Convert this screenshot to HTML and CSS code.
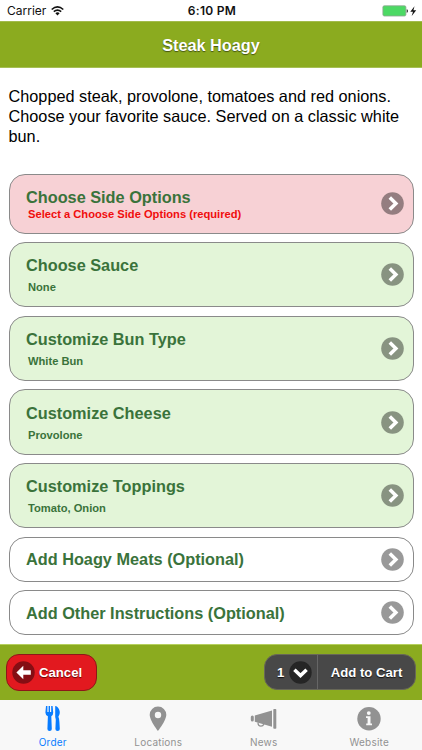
FILE: index.html
```html
<!DOCTYPE html>
<html lang="en">
<head>
<meta charset="utf-8">
<title>Steak Hoagy</title>
<link rel="stylesheet" href="styles.css">
</head>
<body>
<svg class="symbols" aria-hidden="true">
  <symbol id="next" viewBox="0 0 23 23">
    <circle cx="11.5" cy="11.5" r="11.3" fill="#000" fill-opacity=".4"/>
    <path d="M8.8 5.4 14.9 11.5 8.8 17.6" fill="none" stroke="#fff" stroke-width="3.5"/>
  </symbol>
</svg>
<div class="status">
  <div class="carrier"><span>Carrier</span>
    <svg width="13" height="10" viewBox="0 0 13 10" fill="none" stroke="#111" stroke-width="1.6">
      <path d="M.7 3.5Q6.5-1.6 12.3 3.5M2.8 5.7Q6.5 2.5 10.2 5.7"/>
      <path d="M4.4 7.2Q6.5 5.4 8.6 7.2L6.5 9.4Z" fill="#111" stroke="none"/>
    </svg>
  </div>
  <div class="time">6:10 PM</div>
  <div class="power">
    <svg width="35" height="12" viewBox="0 0 35 12">
      <rect x=".9" y=".8" width="23" height="10.2" rx="1.4" fill="#4cd964" stroke="#8fa592" stroke-width=".8"/>
      <path d="M24.7 4.2Q26 4.5 26 6T24.7 7.8Z" fill="#333"/>
      <path d="M32.5 1.2 28.3 6.7H31L29.7 11 34.2 5.2H31.4Z" fill="#111"/>
    </svg>
  </div>
</div>
<header class="title">Steak Hoagy</header>
<main>
  <p class="description">Chopped steak, provolone, tomatoes and red onions. Choose your favorite sauce. Served on a classic white bun.</p>
  <div class="options">
    <div class="option required"><div><h2>Choose Side Options</h2><p>Select a Choose Side Options (required)</p></div><svg class="next"><use href="#next"/></svg></div>
    <div class="option chosen"><div><h2>Choose Sauce</h2><p>None</p></div><svg class="next"><use href="#next"/></svg></div>
    <div class="option chosen"><div><h2>Customize Bun Type</h2><p>White Bun</p></div><svg class="next"><use href="#next"/></svg></div>
    <div class="option chosen"><div><h2>Customize Cheese</h2><p>Provolone</p></div><svg class="next"><use href="#next"/></svg></div>
    <div class="option chosen"><div><h2>Customize Toppings</h2><p>Tomato, Onion</p></div><svg class="next"><use href="#next"/></svg></div>
    <div class="option"><h2>Add Hoagy Meats (Optional)</h2><svg class="next"><use href="#next"/></svg></div>
    <div class="option"><h2>Add Other Instructions (Optional)</h2><svg class="next"><use href="#next"/></svg></div>
  </div>
</main>
<footer class="actions">
  <div class="cancel">
    <svg width="23" height="23" viewBox="0 0 23 23"><circle cx="11.5" cy="11.5" r="11.2" fill="#850e14"/><path d="M4.4 11.5 11.3 4.8V9.3H18.8V13.7H11.3V18.2Z" fill="#fff"/></svg>
    <span>Cancel</span>
  </div>
  <div class="cart">
    <div class="quantity"><span>1</span>
      <svg width="23" height="23" viewBox="0 0 23 23"><circle cx="11.5" cy="11.5" r="11.2" fill="#252525"/><path d="M5.4 8.7 11.5 14.6 17.6 8.7" fill="none" stroke="#fff" stroke-width="3.5"/></svg>
    </div>
    <div class="add">Add to Cart</div>
  </div>
</footer>
<nav class="tabs">
  <div class="tab active">
    <svg width="28" height="28" viewBox="0 0 28 28" fill="currentColor">
      <path d="M7 2H8.4V8H9.6V2H11V8H12.2V2H13.6L14.2 8.5Q14.3 11 12.3 12.3L12.8 25Q12.8 27 10.6 27T8.4 25L8.9 12.3Q6.3 11 6.4 8.5Z"/>
      <path d="M16.2 2Q18.6 2 20.1 5.5 21.8 9 19.4 12.7 20.2 14 20.4 18L20.8 25Q20.8 27 18.6 27T16.4 25L16.8 15.5 16.2 13Z"/>
    </svg><span>Order</span>
  </div>
  <div class="tab">
    <svg width="28" height="28" viewBox="0 0 28 28" fill="currentColor"><path fill-rule="evenodd" d="M14 2.5A8.3 8.3 0 0 1 22.3 10.8C22.3 16.5 14 27 14 27S5.7 16.5 5.7 10.8A8.3 8.3 0 0 1 14 2.5ZM14 7.8A3.2 3.2 0 1 0 14 14.2 3.2 3.2 0 0 0 14 7.8Z"/></svg><span>Locations</span>
  </div>
  <div class="tab">
    <svg width="28" height="28" viewBox="0 0 28 28" fill="currentColor">
      <rect x=".8" y="11.4" width="3" height="6.2" rx="1.5"/><path d="M4.8 11.6 22 6.6V22.8L4.8 17.7Z"/><rect x="23.3" y="5" width="3" height="19.8" rx=".8"/>
      <path d="M8 18.5Q8 22.2 11 22.2 13 22.2 14 20" fill="none" stroke="currentColor" stroke-width="1.3"/>
    </svg><span>News</span>
  </div>
  <div class="tab">
    <svg width="28" height="28" viewBox="0 0 28 28"><circle cx="14" cy="14.8" r="11.7" fill="currentColor"/><circle cx="13.8" cy="9.1" r="1.9" fill="#f8f8f8"/><path d="M11 12.2H15.5V19.5H17V21.2H11.2V19.5H12.6V13.9H11Z" fill="#f8f8f8"/></svg><span>Website</span>
  </div>
</nav>
</body>
</html>
```
FILE: styles.css
```css
* { box-sizing: border-box; }
body {
  margin: 0;
  width: 422px;
  height: 750px;
  overflow: hidden;
  display: flex;
  flex-direction: column;
  background: #fff;
  font-family: "Liberation Sans", Arial, sans-serif;
}
h2, p { margin: 0; }
.symbols { display: none; }
.status {
  height: 21px;
  display: grid;
  grid-template-columns: 1fr auto 1fr;
  align-items: center;
  padding: 1px 5px 0 7px;
  font: 12px/20px Inter, sans-serif;
  color: #111;
}
.carrier { display: flex; align-items: center; gap: 5px; }
.time { font-weight: 600; letter-spacing: .3px; }
.power { display: flex; justify-content: flex-end; }
.title {
  height: 47px;
  background: #8bab1f;
  border-top: 1px solid #a2bb4c;
  border-bottom: 1px solid #a6bf55;
  color: #fff;
  font-size: 16.3px;
  font-weight: bold;
  line-height: 47px;
  text-align: center;
  text-shadow: 0 1px 1px #445410;
}
main { height: 576.4px; padding: 18px 8.5px 0; }
.description {
  height: 88.4px;
  color: #000;
  font-size: 16.27px;
  line-height: 20.1px;
}
.options { display: flex; flex-direction: column; gap: 8.5px; }
.option {
  height: 44.8px;
  display: flex;
  align-items: center;
  justify-content: space-between;
  padding: 0 8.5px 0 16.5px;
  border: 1px solid #8a8a8a;
  border-radius: 16px;
  background: #fff;
  color: #3a733b;
}
.option h2 { font-size: 16.3px; line-height: 20px; }
.option p { padding-left: 2px; font-size: 11.17px; font-weight: bold; line-height: 14px; }
.chosen { height: 65.2px; background: #e3f5d8; }
.chosen p { margin-top: 5px; }
.required { height: 59.2px; background: #f7d1d5; }
.required p { margin-top: 0; color: #f00d0d; }
.next { width: 23px; height: 23px; flex: none; }
.actions {
  height: 55.6px;
  display: flex;
  justify-content: space-between;
  padding: 9px 6px 0;
  background: #8bab1f;
  border-top: 1px solid #b6d05e;
  color: #fff;
  font-size: 13.15px;
  font-weight: bold;
}
.cancel {
  width: 91px;
  height: 37px;
  display: flex;
  align-items: center;
  gap: 4px;
  padding-left: 5px;
  border: 1px solid #8d1818;
  border-radius: 13px;
  background: #e2191f;
  text-shadow: 0 1px 1px #600;
}
.cart {
  width: 152px;
  height: 36px;
  display: flex;
  border: 1px solid #686858;
  border-radius: 13px;
  background: #484848;
  text-shadow: 0 1px 1px #111;
}
.quantity {
  width: 53px;
  display: flex;
  align-items: center;
  gap: 5px;
  padding-left: 12px;
  border-right: 1px solid #666;
}
.add { flex: 1; line-height: 36px; text-align: center; }
.tabs {
  height: 50px;
  display: grid;
  grid-template-columns: repeat(4, 1fr);
  background: #f8f8f8;
  color: #929292;
}
.tab {
  display: flex;
  flex-direction: column;
  align-items: center;
  padding-top: 4px;
  font: 10px/12px Inter, sans-serif;
  letter-spacing: .2px;
}
.tab span { margin-top: 4px; }
.active { color: #087cff; }
```
